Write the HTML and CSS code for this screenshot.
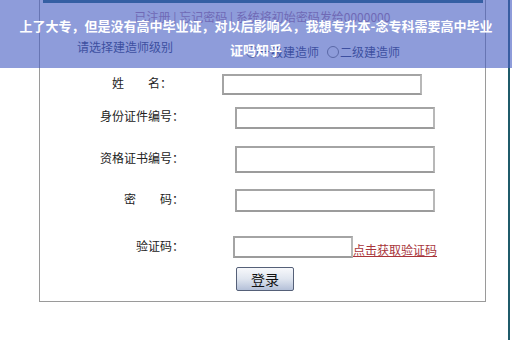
FILE: index.html
```html
<!DOCTYPE html>
<html lang="zh-CN">
<head>
    <meta charset="UTF-8">
    <meta name="viewport" content="width=device-width, initial-scale=1.0">
    <title>证吗知乎</title>
    <link rel="stylesheet" href="styles.css">
</head>
<body>
    <div class="page">
        <div class="frame">
            <div class="topbar"></div>
            <p class="notice">已注册 | 忘记密码 | 系统将初始密码发给0000000</p>
            <div class="level">
                <span class="level-label">请选择建造师级别</span>
                <span class="radios">
                    <span class="radio"></span>一级建造师
                    <span class="radio radio-second"></span>二级建造师
                </span>
            </div>

            <div class="row row-name">
                <span class="label label-short">姓　　名：</span>
                <span class="field field-first"></span>
            </div>
            <div class="row row-id">
                <span class="label">身份证件编号：</span>
                <span class="field"></span>
            </div>
            <div class="row row-cert">
                <span class="label">资格证书编号：</span>
                <span class="field field-tall"></span>
            </div>
            <div class="row row-pass">
                <span class="label">密　　码：</span>
                <span class="field field-mid"></span>
            </div>
            <div class="row row-code">
                <span class="label">验证码：</span>
                <span class="field field-code"></span>
                <a class="code-link" href="#">点击获取验证码</a>
            </div>
            <div class="row row-btn">
                <button class="login-btn">登录</button>
            </div>
        </div>
        <div class="edge"></div>
    </div>

    <div class="title-band">
        <h1>上了大专，但是没有高中毕业证，对以后影响么，我想专升本-念专科需要高中毕业证吗知乎</h1>
    </div>
</body>
</html>
```

FILE: styles.css
```css
body{
    margin: 0;
    background-color: white;
    font-family: "Noto Sans CJK SC", "Noto Sans", sans-serif;
    color: #333;
}
.page{
    display: flex;
    height: 340px;
    padding-left: 39px;
}
.frame{
    width: 447px;
    height: 302px;
    box-sizing: border-box;
    border-left: 1px solid #9a9a9a;
    border-right: 1px solid #9a9a9a;
    border-bottom: 1px solid #9a9a9a;
}
.topbar{
    height: 3px;
    margin: 0 2px 0 3px;
    background-color: #16606f;
}
.notice{
    margin: 0;
    height: 27px;
    line-height: 27px;
    font-size: 12px;
    text-align: center;
    color: #b07a9e;
}
.level{
    display: flex;
    height: 38px;
    font-size: 12px;
    color: #2a3566;
}
.level-label{
    margin-top: 10px;
    margin-left: 37px;
    line-height: 14px;
}
.radios{
    display: flex;
    align-items: center;
    margin-top: 15px;
    margin-left: 73px;
    line-height: 14px;
    height: 14px;
}
.radio{
    box-sizing: border-box;
    width: 12px;
    height: 12px;
    border: 1px solid #777;
    border-radius: 50%;
    background-color: white;
    margin-right: 1px;
}
.radio-second{
    margin-left: 8px;
}

.row{
    display: flex;
    align-items: center;
}
.label{
    width: 144px;
    text-align: right;
    font-size: 12px;
    line-height: 14px;
    color: #222;
    margin-bottom: 3px;
}
.label-short{
    width: 132px;
}
.field{
    display: block;
    box-sizing: border-box;
    width: 200px;
    height: 22px;
    margin-left: 51px;
    border: 2px solid #a4a4a4;
    border-right-color: #b8b8b8;
    border-bottom-color: #9c9c9c;
    background-color: white;
}
.field-first{
    height: 21px;
    margin-left: 50px;
}
.field-tall{
    height: 27px;
}
.field-mid{
    height: 23px;
}
.field-code{
    width: 120px;
    margin-left: 49px;
}
.row-name{ height: 32px; }
.row-id{ height: 35px; }
.row-cert{ height: 49px; }
.row-pass{ height: 33px; }
.row-code{
    height: 22px;
    margin-top: 19px;
}
.code-link{
    font-size: 12px;
    color: #a8343a;
    text-decoration: underline;
    margin-top: 6px;
    line-height: 14px;
}
.row-btn{
    margin-top: 9px;
}
.login-btn{
    margin-left: 196px;
    width: 58px;
    height: 24px;
    padding: 0;
    font-family: "Noto Sans CJK SC", sans-serif;
    font-size: 14px;
    color: #111;
    border: 1px solid #556078;
    border-radius: 2px;
    background: linear-gradient(#f7f8fb, #dfe5ef 50%, #b4c0d8);
}
.edge{
    width: 2px;
    height: 340px;
    margin-left: 22px;
    background-color: #1f5b6a;
}

.title-band{
    position: absolute;
    top: 0;
    left: 0;
    width: 512px;
    height: 68px;
    box-sizing: border-box;
    padding: 14px 18px 0;
    background-color: rgba(72, 96, 196, 0.62);
}
.title-band > h1{
    margin: 0;
    font-size: 13px;
    line-height: 24px;
    font-weight: bold;
    color: white;
    text-align: center;
}
```
